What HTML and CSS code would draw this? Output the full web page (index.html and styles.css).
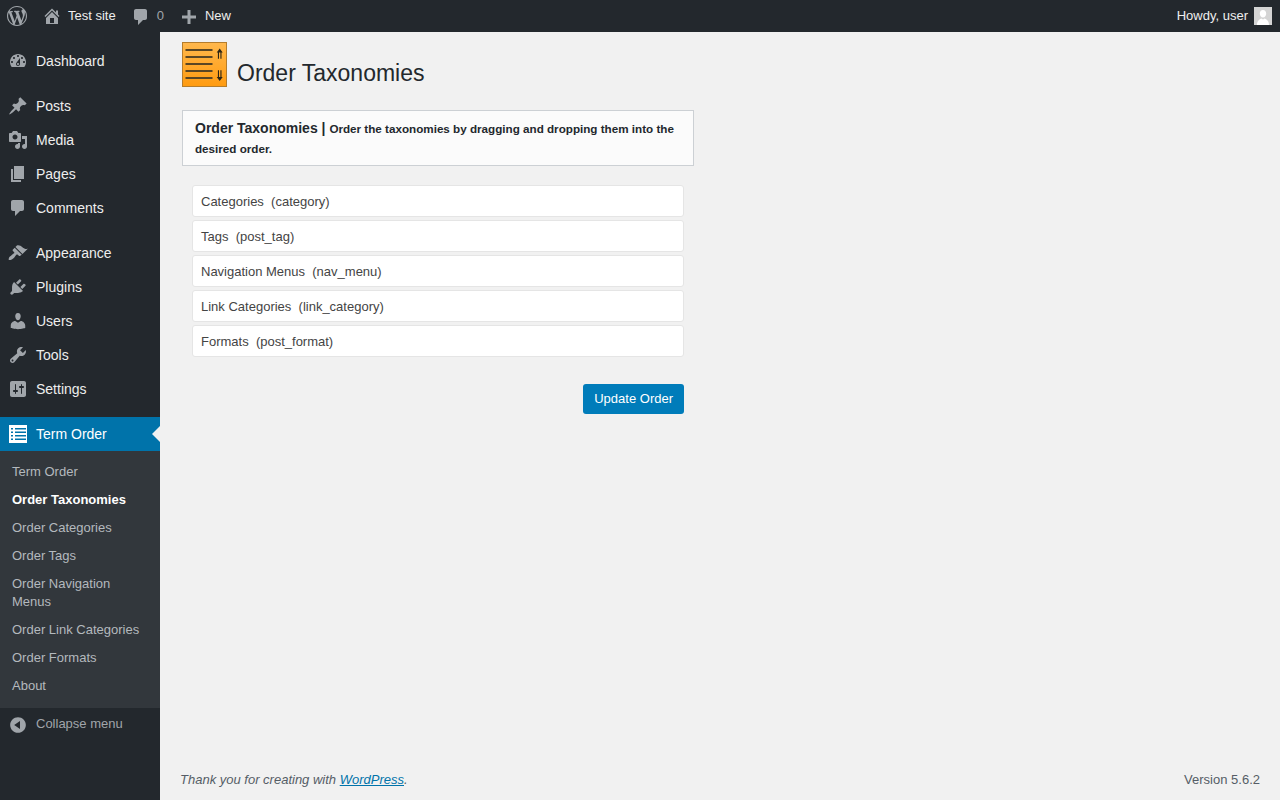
FILE: index.html
```html
<!DOCTYPE html>
<html lang="en">
<head>
<meta charset="utf-8">
<title>Order Taxonomies</title>
<link rel="stylesheet" href="styles.css">
</head>
<body>
<header class="adminbar">
  <div class="bar-left">
    <a class="bar-logo"><svg class="ico20" viewBox="0 0 20 20"><path d="M20 10c0-5.51-4.49-10-10-10C4.48 0 0 4.49 0 10c0 5.52 4.48 10 10 10 5.51 0 10-4.48 10-10zM7.78 15.37L4.37 6.22c.55-.02 1.17-.08 1.17-.08.5-.06.44-1.13-.06-1.11 0 0-1.45.11-2.37.11-.18 0-.37 0-.58-.01C4.12 2.69 6.87 1.11 10 1.11c2.33 0 4.45.87 6.05 2.34-.68-.11-1.65.39-1.65 1.58 0 .74.45 1.36.9 2.1.35.61.55 1.36.55 2.46 0 1.49-1.4 5-1.4 5l-3.03-8.37c.54-.02.82-.17.82-.17.5-.05.44-1.25-.06-1.22 0 0-1.44.12-2.38.12-.87 0-2.33-.12-2.33-.12-.5-.03-.56 1.2-.06 1.22l.92.08 1.26 3.41zM17.41 10c.24-.64.74-1.87.43-4.25.7 1.29 1.05 2.71 1.05 4.25 0 3.29-1.73 6.24-4.4 7.78.97-2.59 1.94-5.2 2.92-7.78zM6.1 18.09C3.12 16.65 1.11 13.53 1.11 10c0-1.3.23-2.48.72-3.59C3.25 10.3 4.67 14.2 6.1 18.09zm4.03-6.63l2.58 6.98c-.86.29-1.76.45-2.71.45-.79 0-1.57-.11-2.29-.33.81-2.38 1.62-4.74 2.42-7.1z"/></svg></a>
    <a class="bar-item"><svg class="ico20" viewBox="0 0 20 20"><path d="M16 8.5l1.53 1.53-1.06 1.06L10 4.62l-6.47 6.47-1.06-1.06L10 2.5l4 4v-2h2v4zm-6-2.46l6 5.99V18H4v-5.97zM12 17v-5H8v5h4z"/></svg><span>Test site</span></a>
    <a class="bar-item"><svg class="ico20" viewBox="0 0 20 20"><path d="M5 2h9c1.100 0 2 .9 2 2v7c0 1.100-.9 2-2 2h-2l-5 5v-5H5c-1.100 0-2-.9-2-2V4c0-1.100.9-2 2-2z"/></svg><span class="bar-count">0</span></a>
    <a class="bar-item"><svg class="ico20" viewBox="0 0 20 20"><path d="M17 8.500v3h-5.500V17h-3v-5.500H3v-3h5.500V3h3v5.500z"/></svg><span>New</span></a>
  </div>
  <a class="bar-user"><span>Howdy, user</span><span class="avatar"><svg viewBox="0 0 18 18"><rect width="18" height="18" fill="#d4d4d4"/><path d="M9 3c2 0 3.200 1.600 3.200 3.500S11 10.500 9 10.500 5.800 8.400 5.800 6.500 7 3 9 3zM3 18c0-4 2.500-6 4.500-6.500L9 12.500l1.500-1C12.500 12 15 14 15 18z" fill="#fff"/></svg></span></a>
</header>
<div class="layout">
  <nav class="sidebar">
    <ul class="menu">
      <li class="item sep"><svg class="ico20" viewBox="0 0 20 20"><path d="M3.760 16h12.480c1.100-1.370 1.760-3.110 1.760-5 0-4.420-3.580-8-8-8s-8 3.580-8 8c0 1.890.66 3.630 1.760 5zM10 4c.55 0 1 .45 1 1s-.45 1-1 1-1-.45-1-1 .45-1 1-1zM6 6c.55 0 1 .45 1 1s-.45 1-1 1-1-.45-1-1 .45-1 1-1zm8 0c.55 0 1 .45 1 1s-.45 1-1 1-1-.45-1-1 .45-1 1-1zm-5.370 5.550L12 7v6c0 1.100-.9 2-2 2s-2-.9-2-2c0-.57.24-1.080.63-1.450zM4 10c.55 0 1 .45 1 1s-.45 1-1 1-1-.45-1-1 .45-1 1-1zm12 0c.55 0 1 .45 1 1s-.45 1-1 1-1-.45-1-1 .45-1 1-1zm-5 3c0-.55-.45-1-1-1s-1 .45-1 1 .45 1 1 1 1-.45 1-1z"/></svg><span>Dashboard</span></li>
      <li class="item"><svg class="ico20" viewBox="0 0 20 20"><path d="M10.440 3.020l1.820-1.820 6.360 6.350-1.830 1.820c-1.050-.68-2.480-.57-3.410.36l-.75.75c-.92.93-1.040 2.350-.35 3.410l-1.830 1.820-2.410-2.410-2.800 2.790c-.42.42-3.380 2.710-3.800 2.290s1.860-3.390 2.280-3.810l2.790-2.790L4.100 9.360l1.830-1.820c1.050.69 2.480.57 3.400-.36l.75-.75c.93-.92 1.050-2.350.36-3.410z"/></svg><span>Posts</span></li>
      <li class="item"><svg class="ico20" viewBox="0 0 20 20"><path d="M13 11V4c0-.55-.45-1-1-1h-1.670L9 1H5L3.670 3H2c-.55 0-1 .45-1 1v7c0 .55.45 1 1 1h10c.55 0 1-.45 1-1zM7 4.500c1.380 0 2.500 1.120 2.500 2.500S8.380 9.500 7 9.500 4.500 8.380 4.500 7 5.620 4.500 7 4.500zM14 6h5v10.500c0 1.380-1.120 2.500-2.500 2.500S14 17.880 14 16.500s1.120-2.500 2.500-2.500c.17 0 .34.02.5.05V9h-3V6zm-4 8.050V13h2v3.500c0 1.380-1.120 2.500-2.500 2.500S7 17.880 7 16.500 8.120 14 9.500 14c.17 0 .34.02.5.05z"/></svg><span>Media</span></li>
      <li class="item"><svg class="ico20" viewBox="0 0 20 20"><path d="M6 15V2h10v13H6zm-1 1h8v2H3V5h2v11z"/></svg><span>Pages</span></li>
      <li class="item sep"><svg class="ico20" viewBox="0 0 20 20"><path d="M5 2h9c1.100 0 2 .9 2 2v7c0 1.100-.9 2-2 2h-2l-5 5v-5H5c-1.100 0-2-.9-2-2V4c0-1.100.9-2 2-2z"/></svg><span>Comments</span></li>
      <li class="item"><svg class="ico20" viewBox="0 0 20 20"><path d="M14.480 11.060L7.410 3.990l1.500-1.500c.5-.56 2.300-.47 3.510.32 1.210.8 1.430 1.280 2.910 2.100 1.180.64 2.450 1.260 4.450.85zm-.71.71L6.700 4.700 4.930 6.470c-.39.39-.39 1.020 0 1.410l1.060 1.060c.39.39.39 1.030 0 1.420-.6.6-1.430 1.110-2.210 1.690-.35.26-.7.53-1.010.84C1.430 13.230.5 15 .73 16.990c2 .23 3.770-.7 5.100-2.040.31-.31.58-.66.84-1.010.58-.78 1.090-1.610 1.690-2.210.39-.39 1.030-.39 1.420 0l1.060 1.060c.39.39 1.020.39 1.410 0z"/></svg><span>Appearance</span></li>
      <li class="item"><svg class="ico20" viewBox="0 0 20 20"><path d="M13.110 4.360L9.870 7.600 8 5.730l3.240-3.240c.35-.34 1.050-.2 1.560.32.52.51.66 1.210.31 1.550zm-8 1.770l.91-1.120 9.010 9.010-1.190.84c-.71.71-2.630 1.160-3.820 1.160H6.140L4.900 17.260c-.59.59-1.540.59-2.120 0-.59-.58-.59-1.530 0-2.120l1.240-1.240v-3.880c0-1.130.4-3.190 1.090-3.890zm7.260 3.970l3.240-3.240c.34-.35 1.040-.21 1.550.31.52.51.66 1.210.31 1.550l-3.240 3.250z"/></svg><span>Plugins</span></li>
      <li class="item"><svg class="ico20" viewBox="0 0 20 20"><path d="M10 9.250c-2.270 0-2.730-3.440-2.730-3.440C7 4.020 7.820 2 9.970 2c2.160 0 2.980 2.020 2.710 3.810 0 0-.41 3.440-2.680 3.440zm0 2.570L12.720 10c2.390 0 4.520 2.330 4.520 4.530v2.490s-3.650 1.130-7.240 1.130c-3.650 0-7.240-1.130-7.240-1.130v-2.490c0-2.250 1.940-4.480 4.470-4.480z"/></svg><span>Users</span></li>
      <li class="item"><svg class="ico20" viewBox="0 0 20 20"><path d="M16.680 9.770c-1.340 1.340-3.300 1.670-4.950.99l-5.410 6.520c-.99.99-2.590.99-3.580 0s-.99-2.590 0-3.570l6.520-5.420c-.68-1.650-.35-3.610.99-4.950 1.280-1.280 3.120-1.620 4.720-1.060l-2.890 2.890 2.820 2.820 2.860-2.870c.53 1.580.18 3.390-1.080 4.650zM3.810 16.210c.4.39 1.040.39 1.430 0 .4-.4.4-1.040 0-1.430-.39-.4-1.030-.4-1.430 0-.39.39-.39 1.030 0 1.430z"/></svg><span>Tools</span></li>
      <li class="item sep"><svg class="ico20" viewBox="0 0 20 20"><path d="M18 16V4c0-1.100-.9-2-2-2H4c-1.100 0-2 .9-2 2v12c0 1.100.9 2 2 2h12c1.100 0 2-.9 2-2zM8 11h1c.55 0 1 .45 1 1s-.45 1-1 1H8v1.500c0 .28-.22.5-.5.5s-.5-.22-.5-.5V13H6c-.55 0-1-.45-1-1s.45-1 1-1h1V5.500c0-.28.22-.5.5-.5s.5.22.5.5V11zm5-2h-1c-.55 0-1-.45-1-1s.45-1 1-1h1V5.500c0-.28.22-.5.5-.5s.5.22.5.5V7h1c.55 0 1 .45 1 1s-.45 1-1 1h-1v5.500c0 .28-.22.5-.5.5s-.5-.22-.5-.5V9z"/></svg><span>Settings</span></li>
      <li class="item current"><svg class="ico-term" viewBox="0 0 18 18"><rect width="18" height="18" fill="#fff"/><path d="M2 3h2v1.500H2zM6 3h11v1.500H6zM2 6.500h2V8H2zM6 6.500h11V8H6zM2 10h2v1.500H2zM6 10h11v1.500H6zM2 13.500h2V15H2zM6 13.500h11V15H6z" fill="#0073aa"/></svg><span>Term Order</span></li>
    </ul>
    <ul class="submenu">
      <li>Term Order</li>
      <li class="active">Order Taxonomies</li>
      <li>Order Categories</li>
      <li>Order Tags</li>
      <li>Order Navigation Menus</li>
      <li>Order Link Categories</li>
      <li>Order Formats</li>
      <li>About</li>
    </ul>
    <div class="collapse"><svg class="ico20" viewBox="0 0 20 20"><path d="M10 2.160c4.330 0 7.840 3.510 7.840 7.840s-3.510 7.840-7.840 7.840S2.160 14.330 2.160 10 5.710 2.160 10 2.160zm2 11.720V6.120L6.180 9.970z"/></svg><span>Collapse menu</span></div>
  </nav>
  <main class="content">
    <div class="wrap">
      <div class="heading">
        <svg class="plugin-icon" viewBox="0 0 45 45">
          <defs><linearGradient id="og" x1="0" y1="0" x2="0" y2="1"><stop offset="0" stop-color="#ffb84d"/><stop offset="1" stop-color="#ff9b10"/></linearGradient></defs>
          <rect x=".5" y=".5" width="44" height="44" fill="url(#og)" stroke="#b57d2c"/>
          <path d="M3.500 8h27M3.500 15h27M3.500 22h27M3.500 29h27M3.500 36h27" stroke="#5a4624" stroke-width="2" fill="none"/>
          <path d="M37.700 6.500l3 4h-1.200v6.200h-1.100v-6.200h-1.400v6.200h-1.100v-6.200h-1.200z" fill="#2b2415"/>
          <path d="M37.700 39l3-4h-1.200v-6.700h-1.100V35h-1.400v-6.700h-1.100V35h-1.200z" fill="#2b2415"/>
        </svg>
        <h1>Order Taxonomies</h1>
      </div>
      <div class="notice"><strong class="notice-title">Order Taxonomies | </strong><strong class="notice-text">Order the taxonomies by dragging and dropping them into the desired order.</strong></div>
      <ul class="tax-list">
        <li>Categories&nbsp; (category)</li>
        <li>Tags&nbsp; (post_tag)</li>
        <li>Navigation Menus&nbsp; (nav_menu)</li>
        <li>Link Categories&nbsp; (link_category)</li>
        <li>Formats&nbsp; (post_format)</li>
      </ul>
      <div class="actions"><button class="btn" type="button">Update Order</button></div>
    </div>
    <footer class="footer">
      <p class="thanks">Thank you for creating with <a>WordPress</a>.</p>
      <p class="version">Version 5.6.2</p>
    </footer>
  </main>
</div>
</body>
</html>
```

FILE: styles.css
```css
* { box-sizing: border-box; }
html, body { margin: 0; padding: 0; height: 100%; }
body {
  font-family: "Liberation Sans", Arial, sans-serif;
  font-size: 13px;
  line-height: 1.4;
  color: #444;
  background: #f1f1f1;
  overflow: hidden;
}
ul { list-style: none; margin: 0; padding: 0; }
svg { display: block; flex: none; }
.ico20 { width: 20px; height: 20px; fill: #a0a5aa; }

.adminbar {
  height: 32px;
  background: #23282d;
  color: #eee;
  display: flex;
  justify-content: space-between;
  align-items: center;
  padding-right: 8px;
}
.bar-left { display: flex; align-items: center; height: 32px; }
.bar-logo { padding: 0 7px; display: flex; }
.bar-item { display: flex; align-items: center; gap: 6px; padding: 0 10px; height: 32px; }
.bar-item .ico20 { margin-left: -2px; }
.bar-item + .bar-item { margin-left: -3px; }
.bar-item + .bar-item .ico20 { align-self: flex-start; margin-top: 7px; }
.bar-count { color: #a0a5aa; }
.bar-user { display: flex; align-items: center; gap: 6px; }
.avatar { width: 18px; height: 18px; display: block; }

.layout { display: flex; height: 768px; }
.sidebar { width: 160px; flex: none; background: #23282d; padding-top: 12px; }
.item {
  height: 34px;
  display: flex;
  align-items: center;
  gap: 8px;
  padding-left: 8px;
  font-size: 14px;
  color: #eee;
}
.item span { padding-top: 2px; }
.sep { margin-bottom: 11px; }
.current { background: #0073aa; color: #fff; position: relative; margin-bottom: 0; }
.current::after {
  content: "";
  position: absolute;
  right: 0;
  top: 9px;
  border: 8px solid transparent;
  border-right-color: #f1f1f1;
  border-left-width: 0;
}
.ico-term { width: 18px; height: 18px; margin-left: 1px; margin-right: 1px; }

.submenu { background: #32373c; padding: 7px 0 8px; color: #b4b9be; }
.submenu li { padding: 5px 12px; line-height: 18px; }
.submenu .active { color: #fff; font-weight: 700; }

.collapse { display: flex; gap: 8px; padding: 6px 0 0 8px; color: #a0a5aa; height: 32px; }
.collapse span { line-height: 20px; }
.collapse .ico20 { margin-top: 1px; }

.content { flex: 1; display: flex; flex-direction: column; justify-content: space-between; padding-left: 20px; }
.wrap { margin: 10px 20px 0 2px; }
.heading { display: flex; align-items: flex-start; gap: 10px; }
.plugin-icon { width: 45px; height: 45px; }
h1 { margin: 17px 0 0; font-size: 23px; font-weight: 400; line-height: 29px; color: #23282d; }

.notice {
  width: 512px;
  height: 56px;
  margin-top: 22px;
  padding: 8px 12px 0;
  background: #fbfbfb;
  border: 1px solid #ccd0d4;
  line-height: 19.500px;
  color: #23282d;
}
.notice-title { font-size: 14px; }
.notice-text { font-size: 11.670px; }

.tax-list { width: 492px; margin: 19px 0 0 10px; display: flex; flex-direction: column; gap: 3px; }
.tax-list li {
  height: 32px;
  line-height: 30px;
  padding: 1px 8px 0;
  background: #fff;
  border: 1px solid #e5e5e5;
  border-radius: 3px;
}
.actions { width: 492px; margin: 27px 0 0 10px; display: flex; justify-content: flex-end; }
.btn {
  height: 30px;
  padding: 0 11px 2px;
  border: 0;
  border-radius: 3px;
  background: #007cba;
  color: #fff;
  font: 13px "Liberation Sans", Arial, sans-serif;
}

.footer { display: flex; justify-content: space-between; padding: 0 20px 11px 0; color: #555d66; }
.footer p { margin: 0; line-height: 18px; }
.thanks { font-style: italic; }
.thanks a { color: #0073aa; text-decoration: underline; }
```
